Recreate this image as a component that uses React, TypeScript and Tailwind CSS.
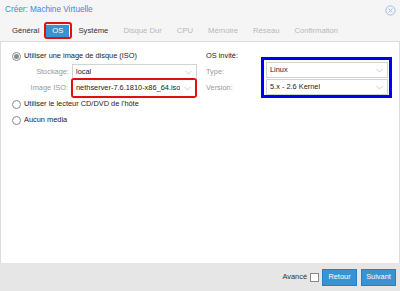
import React from 'react';

const tabs = ['Général', 'OS', 'Système', 'Disque Dur', 'CPU', 'Mémoire', 'Réseau', 'Confirmation'];

const Chevron = () => (
  <svg width="7" height="5" viewBox="0 0 7 5" className="shrink-0">
    <path d="M0.5 1 L3.5 4 L6.5 1" fill="none" stroke="#c2c2c2" strokeWidth="0.8" />
  </svg>
);

const Combo: React.FC<{ value: string; className?: string }> = ({ value, className = '' }) => (
  <div className={`flex items-center justify-between h-[16px] bg-white border border-[#d2d2d2] pl-[3px] pr-[4px] gap-[3px] ${className}`}>
    <span className="overflow-hidden whitespace-nowrap text-[#222]">{value}</span>
    <Chevron />
  </div>
);

const Radio: React.FC<{ checked?: boolean; label: string }> = ({ checked, label }) => (
  <div className="flex items-center gap-[3px] h-[16px]">
    <span className="w-[9px] h-[9px] rounded-full border border-[#8a8a8a] bg-white flex items-center justify-center">
      {checked && <span className="w-[5px] h-[5px] rounded-full bg-[#8c8c8c]" />}
    </span>
    <span className="text-[#222]">{label}</span>
  </div>
);

export default function App() {
  return (
    <div className="w-[400px] h-[291px] bg-[#f5f5f5] flex flex-col text-[7.4px] font-['Liberation_Sans',Arial,sans-serif]">
      <div className="h-[20px] flex items-center justify-between pl-[5px] pr-[4px]">
        <span className="text-[8.2px] text-[#3c8ad9]">Créer: Machine Virtuelle</span>
        <svg width="11" height="11" viewBox="0 0 11 11">
          <circle cx="5.5" cy="5.5" r="4.6" fill="none" stroke="#9fbfe6" strokeWidth="1" />
          <path d="M3.5 3.5 L7.5 7.5 M7.5 3.5 L3.5 7.5" stroke="#9fbfe6" strokeWidth="1" />
        </svg>
      </div>
      <div className="h-[21px] flex items-center pl-[4.5px] text-[7.7px]">
        {tabs.map((t, i) => {
          if (t === 'OS') {
            return (
              <div key={t} className="border-[2.5px] border-[#e01010] rounded-[3px] p-[0.5px] ml-[-3px] mr-[-1px]">
                <div className="bg-[#3892d3] text-white px-[6px] h-[12px] flex items-center">{t}</div>
              </div>
            );
          }
          return (
            <div key={t} className={`px-[7.5px] ${i < 3 ? 'text-[#333]' : 'text-[#b8b8b8]'}`}>
              {t}
            </div>
          );
        })}
      </div>
      <div className="flex-1 bg-white border-x border-t border-[#dcdcdc] flex pt-[6px] pl-[11px]">
        <div className="w-[190px] flex flex-col">
          <Radio checked label="Utiliser une image de disque (ISO)" />
          <div className="flex items-center h-[16px]">
            <span className="w-[60px] text-right pr-[3px] text-[#999]">Stockage:</span>
            <Combo value="local" className="w-[125px]" />
          </div>
          <div className="flex items-center h-[16px]">
            <span className="w-[59px] text-right pr-[3px] text-[#999]">Image ISO:</span>
            <div className="border-2 border-[#e01010] rounded-[3px]">
              <Combo value="nethserver-7.6.1810-x86_64.iso" className="w-[122px] h-[14px] border-0" />
            </div>
          </div>
          <Radio label="Utiliser le lecteur CD/DVD de l'hôte" />
          <Radio label="Aucun media" />
        </div>
        <div className="flex-1 flex flex-col pl-[4px]">
          <div className="h-[16px] flex items-center text-[#222]">OS invité:</div>
          <div className="flex">
            <div className="w-[55px] flex flex-col text-[#999]">
              <div className="h-[16px] flex items-center">Type:</div>
              <div className="h-[16px] flex items-center">Version:</div>
            </div>
            <div className="border-[3px] border-[#0000f0] pt-[2px] pl-[2px] pr-[1px] pb-[0px] mt-[-7px] w-[131px] flex flex-col gap-[1px]">
              <Combo value="Linux" />
              <Combo value="5.x - 2.6 Kernel" />
            </div>
          </div>
        </div>
      </div>
      <div className="h-[28px] bg-[#e6e6e6] flex items-center justify-end pr-[4px]">
        <span className="text-[#333] mr-[3px]">Avancé</span>
        <span className="w-[9px] h-[9px] border border-[#888] bg-white mr-[3px]" />
        <button className="h-[17px] w-[35px] bg-[#3892d3] text-white mr-[4px] border border-[#2c7fbe]">Retour</button>
        <button className="h-[17px] w-[35px] bg-[#3892d3] text-white border border-[#2c7fbe]">Suivant</button>
      </div>
    </div>
  );
}
